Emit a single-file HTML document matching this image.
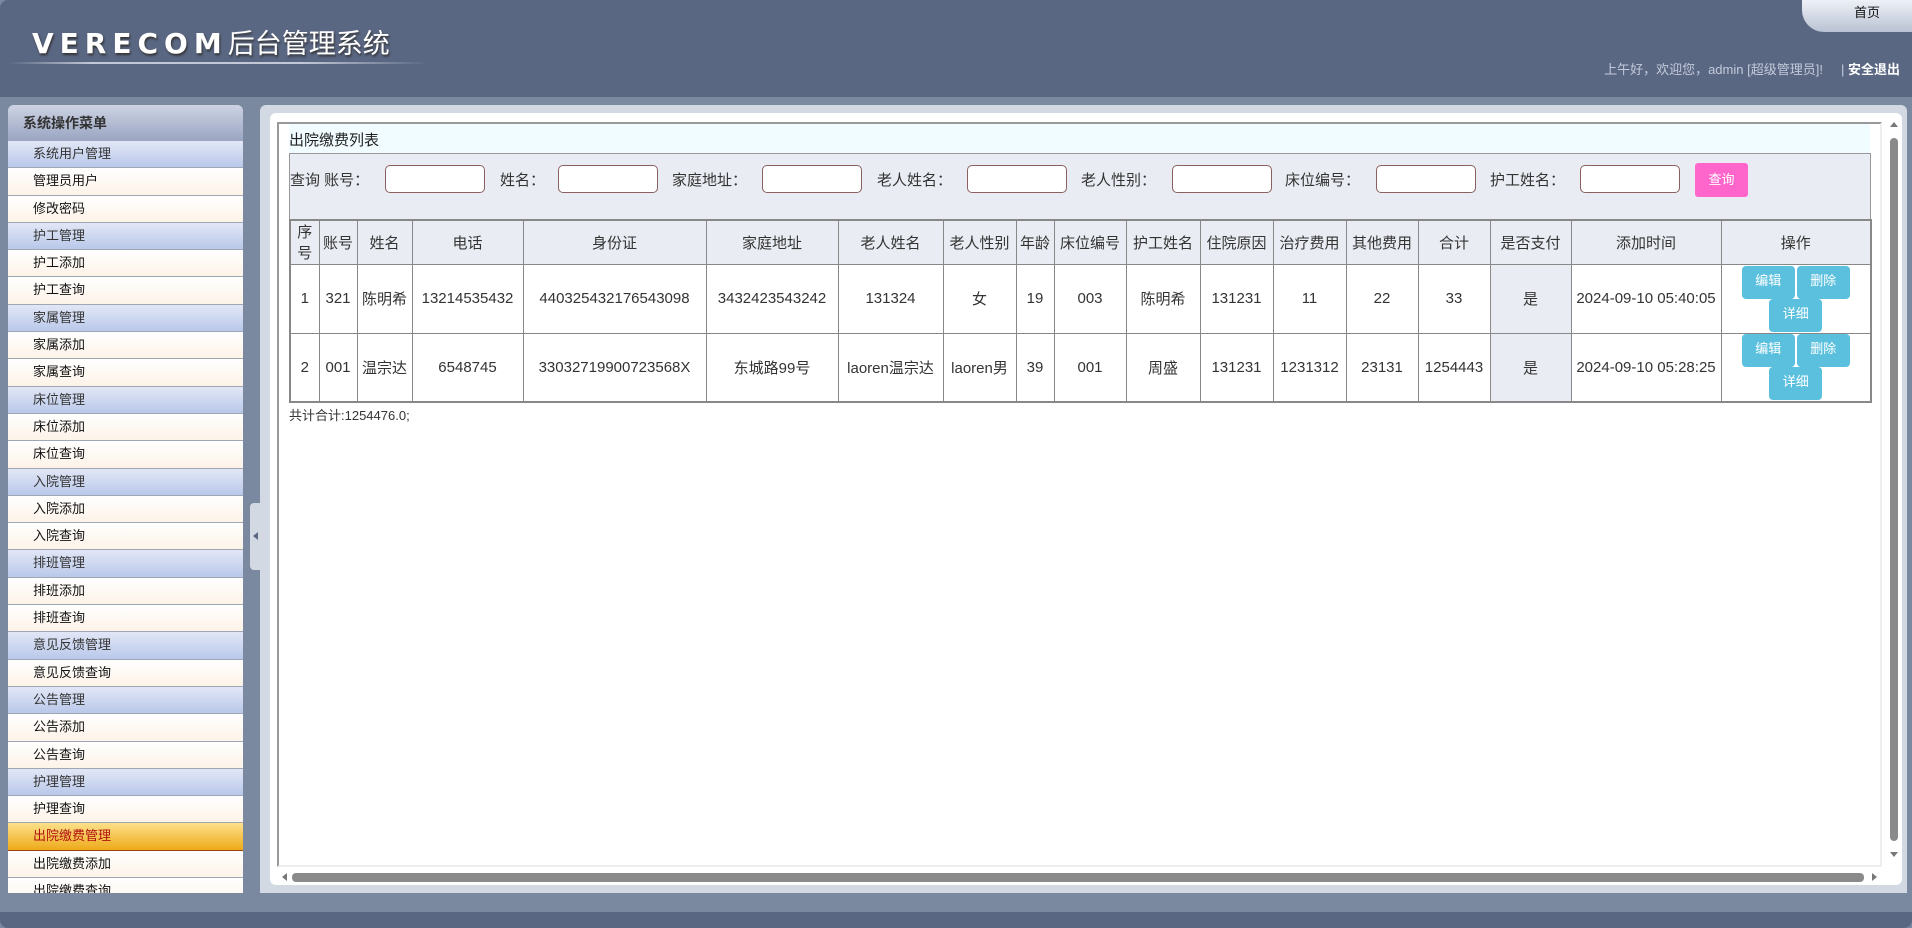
<!DOCTYPE html>
<html><head><meta charset="utf-8"><style>
*{margin:0;padding:0;box-sizing:border-box}
html{overflow:hidden;width:1912px;height:928px}
body{width:1912px;height:928px;overflow:hidden;background:#7a88a0;font-family:"Liberation Sans","Noto Sans CJK SC",sans-serif;position:relative;color:#222}
.hdr{position:absolute;left:0;top:0;width:1912px;height:97px;background:#5a6783;border-radius:8px 8px 0 0}
.logo{position:absolute;left:32px;top:22px;color:#fff;font-size:27px;text-shadow:1px 2px 2px #333}
.logo b{font-family:"DejaVu Sans","Liberation Sans",sans-serif;font-weight:bold;letter-spacing:6px;font-size:28px}
.hline{position:absolute;left:8px;top:62px;width:420px;height:2px;background:linear-gradient(90deg,rgba(255,255,255,0),rgba(220,225,235,.8) 20%,rgba(220,225,235,.8) 70%,rgba(255,255,255,0))}
.tab{position:absolute;right:0;top:0;width:110px;height:32px;background:linear-gradient(#eef1f7,#b9c2d3);border-radius:0 0 0 22px;font-size:13px;text-align:center;line-height:26px;padding-left:20px;color:#111}
.greet{position:absolute;right:12px;top:59px;font-size:13px;color:#c3cada}
.greet span{color:#fff;font-weight:bold}
.side{position:absolute;left:8px;top:105px;width:235px;height:788px;background:#fff;border-radius:6px 6px 0 0;overflow:hidden}
.st{height:36px;background:linear-gradient(#cdd3e3,#9aa5c2);font-size:14px;font-weight:bold;color:#333;line-height:36px;padding-left:15px}
.r{height:27.3px;line-height:26px;font-size:13px;padding-left:25px;border-bottom:1px solid #a0a7b4;background:linear-gradient(#fff,#fdf3e8);color:#111}
.r.h{background:linear-gradient(#e2e7f6,#b9c8ea);color:#333}
.r.a{background:linear-gradient(#fde08a,#eeaa1a);color:#b01010;border-bottom:1px solid #a04010}
.handle{position:absolute;left:250px;top:503px;width:13px;height:67px;background:#d3d9e3;border-radius:4px}
.handle:after{content:"";position:absolute;left:3px;top:29px;border:4px solid transparent;border-right:5px solid #5a6783;border-left:0}
.mainbg{position:absolute;left:260px;top:105px;width:1647px;height:788px;background:#d3d9e3;border-radius:6px 6px 0 0}
.white{position:absolute;left:270px;top:113px;width:1632px;height:772px;background:#fff;border-radius:6px}
.frame{position:absolute;left:277px;top:122px;width:1605px;height:745px;border-left:2px solid #999;border-top:2px solid #999;border-right:2px solid #eee;border-bottom:2px solid #eee;background:#fff}
.ttl{position:absolute;left:289px;top:124px;width:1581px;height:29px;background:#f0fcff;font-size:15px;line-height:34px;color:#222}
.srch{position:absolute;left:289px;top:153px;width:1582px;height:67px;background:#e9edf3;border:1px solid #999}
.lb{position:absolute;top:15px;font-size:15px;color:#333}
.in{position:absolute;top:11px;width:100px;height:28px;background:#fff;border:1px solid #8b6060;border-radius:5px}
.btn{position:absolute;left:1405px;top:9px;width:53px;height:34px;background:#ff66cc;border-radius:3px;color:#fff;font-size:13px;text-align:center;line-height:34px}
table{position:absolute;left:289px;top:219px;border-collapse:collapse;border:2px solid #888;font-size:15px;color:#333}
td,th{border:1px solid #888;text-align:center;font-weight:normal;padding:0}
th{height:44px;background:#e9edf3}
td{height:69px}
td.g{background:#e9edf3}
.b{display:inline-block;width:53px;height:33px;background:#5bc0de;border-radius:4px;color:#fff;font-size:13px;line-height:30px;margin:0 1px}
.tot{position:absolute;left:289px;top:405px;font-size:13px;color:#333}
.vs{position:absolute;left:1888px;top:118px;width:12px;height:745px;overflow:hidden}
.vs .t{position:absolute;left:2px;top:20px;width:8px;height:703px;background:#8a8a8a;border-radius:4px}
.vs .u{position:absolute;left:2px;top:4px;border:4px solid transparent;border-bottom:5px solid #777;border-top:0}
.vs .d{position:absolute;left:2px;top:734px;border:4px solid transparent;border-top:5px solid #777;border-bottom:0}
.hs{position:absolute;left:280px;top:870px;width:1600px;height:14px;overflow:hidden}
.hs .t{position:absolute;left:12px;top:3px;width:1572px;height:9px;background:#8a8a8a;border-radius:4px}
.hs .l{position:absolute;left:2px;top:3px;border:4px solid transparent;border-right:5px solid #777;border-left:0}
.hs .rr{position:absolute;left:1592px;top:3px;border:4px solid transparent;border-left:5px solid #777;border-right:0}
.bot{position:absolute;left:0;top:912px;width:1912px;height:16px;background:#5a6783;border-radius:0 0 8px 8px}
</style></head><body>
<div class="hdr"></div>
<div class="logo"><b>VERECOM</b>后台管理系统</div>
<div class="hline"></div>
<div class="tab">首页</div>
<div class="greet">上午好，欢迎您，admin [超级管理员]! &nbsp;&nbsp;&nbsp; | <span>安全退出</span></div>
<div class="side">
<div class="st">系统操作菜单</div>
<div class="r h">系统用户管理</div><div class="r">管理员用户</div><div class="r">修改密码</div>
<div class="r h">护工管理</div><div class="r">护工添加</div><div class="r">护工查询</div>
<div class="r h">家属管理</div><div class="r">家属添加</div><div class="r">家属查询</div>
<div class="r h">床位管理</div><div class="r">床位添加</div><div class="r">床位查询</div>
<div class="r h">入院管理</div><div class="r">入院添加</div><div class="r">入院查询</div>
<div class="r h">排班管理</div><div class="r">排班添加</div><div class="r">排班查询</div>
<div class="r h">意见反馈管理</div><div class="r">意见反馈查询</div>
<div class="r h">公告管理</div><div class="r">公告添加</div><div class="r">公告查询</div>
<div class="r h">护理管理</div><div class="r">护理查询</div>
<div class="r a">出院缴费管理</div><div class="r">出院缴费添加</div><div class="r">出院缴费查询</div>
</div>
<div class="handle"></div>
<div class="mainbg"></div>
<div class="white"></div>
<div class="frame"></div>
<div class="ttl">出院缴费列表</div>
<div class="srch">
<span class="lb" style="left:0">查询 账号：</span><div class="in" style="left:95px"></div>
<span class="lb" style="left:210px">姓名：</span><div class="in" style="left:268px"></div>
<span class="lb" style="left:382px">家庭地址：</span><div class="in" style="left:472px"></div>
<span class="lb" style="left:587px">老人姓名：</span><div class="in" style="left:677px"></div>
<span class="lb" style="left:791px">老人性别：</span><div class="in" style="left:882px"></div>
<span class="lb" style="left:995px">床位编号：</span><div class="in" style="left:1086px"></div>
<span class="lb" style="left:1200px">护工姓名：</span><div class="in" style="left:1290px"></div>
<div class="btn">查询</div>
</div>
<table>
<colgroup><col style="width:29px"><col style="width:38px"><col style="width:55px"><col style="width:111px"><col style="width:183px"><col style="width:132px"><col style="width:105px"><col style="width:73px"><col style="width:38px"><col style="width:72px"><col style="width:74px"><col style="width:73px"><col style="width:73px"><col style="width:72px"><col style="width:72px"><col style="width:81px"><col style="width:150px"><col style="width:150px"></colgroup>
<tr><th>序<br>号</th><th>账号</th><th>姓名</th><th>电话</th><th>身份证</th><th>家庭地址</th><th>老人姓名</th><th>老人性别</th><th>年龄</th><th>床位编号</th><th>护工姓名</th><th>住院原因</th><th>治疗费用</th><th>其他费用</th><th>合计</th><th>是否支付</th><th>添加时间</th><th>操作</th></tr>
<tr><td>1</td><td>321</td><td>陈明希</td><td>13214535432</td><td>440325432176543098</td><td>3432423543242</td><td>131324</td><td>女</td><td>19</td><td>003</td><td>陈明希</td><td>131231</td><td>11</td><td>22</td><td>33</td><td class="g">是</td><td>2024-09-10 05:40:05</td><td><span class="b">编辑</span><span class="b">删除</span><br><span class="b">详细</span></td></tr>
<tr><td>2</td><td>001</td><td>温宗达</td><td>6548745</td><td>33032719900723568X</td><td>东城路99号</td><td>laoren温宗达</td><td>laoren男</td><td>39</td><td>001</td><td>周盛</td><td>131231</td><td>1231312</td><td>23131</td><td>1254443</td><td class="g">是</td><td>2024-09-10 05:28:25</td><td><span class="b">编辑</span><span class="b">删除</span><br><span class="b">详细</span></td></tr>
</table>
<div class="tot">共计合计:1254476.0;</div>
<div class="vs"><div class="u"></div><div class="t"></div><div class="d"></div></div>
<div class="hs"><div class="l"></div><div class="t"></div><div class="rr"></div></div>
<div class="bot"></div>
</body></html>
